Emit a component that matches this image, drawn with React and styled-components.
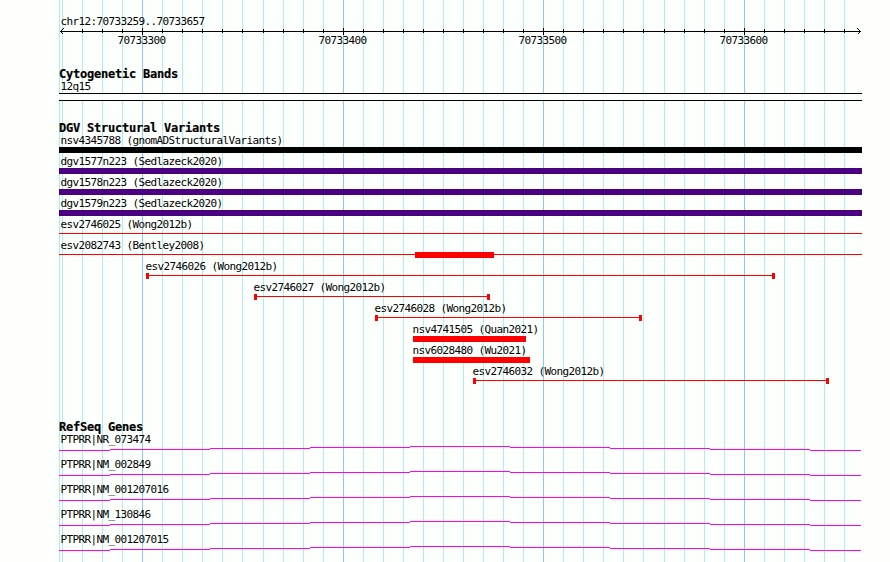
import styled, { createGlobalStyle } from "styled-components";

const VIEW_LEFT = 59;
const VIEW_WIDTH = 803;

const MAJOR_LINES = [142, 343, 543, 744];
const MINOR_LINES = [
  59, 62, 82, 102, 122, 162, 182, 202, 222, 242, 263, 283, 303, 323, 363, 383,
  403, 423, 443, 463, 483, 503, 523, 563, 583, 603, 623, 643, 664, 684, 704,
  724, 764, 784, 804, 824, 844,
];

const RULER_LABELS = [
  { x: 118, text: "70733300" },
  { x: 319, text: "70733400" },
  { x: 519, text: "70733500" },
  { x: 720, text: "70733600" },
];

const VARIANTS = [
  { name: "nsv4345788 (gnomADStructuralVariants)", type: "bar", start: 59, end: 862, label: 60, color: "#000000" },
  { name: "dgv1577n223 (Sedlazeck2020)", type: "bar", start: 59, end: 862, label: 60, color: "#4b0082" },
  { name: "dgv1578n223 (Sedlazeck2020)", type: "bar", start: 59, end: 862, label: 60, color: "#4b0082" },
  { name: "dgv1579n223 (Sedlazeck2020)", type: "bar", start: 59, end: 862, label: 60, color: "#4b0082" },
  { name: "esv2746025 (Wong2012b)", type: "line", start: 59, end: 862, label: 60 },
  { name: "esv2082743 (Bentley2008)", type: "line", start: 59, end: 862, label: 60, core: [415, 494] },
  { name: "esv2746026 (Wong2012b)", type: "span", start: 146, end: 775, label: 145 },
  { name: "esv2746027 (Wong2012b)", type: "span", start: 254, end: 490, label: 253 },
  { name: "esv2746028 (Wong2012b)", type: "span", start: 375, end: 642, label: 374 },
  { name: "nsv4741505 (Quan2021)", type: "bar", start: 413, end: 526, label: 412, color: "#ff0000" },
  { name: "nsv6028480 (Wu2021)", type: "bar", start: 413, end: 530, label: 412, color: "#ff0000" },
  { name: "esv2746032 (Wong2012b)", type: "span", start: 473, end: 829, label: 472 },
];

const GENES = [
  "PTPRR|NR_073474",
  "PTPRR|NM_002849",
  "PTPRR|NM_001207016",
  "PTPRR|NM_130846",
  "PTPRR|NM_001207015",
];

// Intron hat, one entry per flat step: start, end, rise
const INTRON_STEPS = [
  [59, 110, 0],
  [110, 210, 1],
  [210, 310, 2],
  [310, 410, 3],
  [410, 510, 4],
  [510, 610, 3],
  [610, 710, 2],
  [710, 810, 1],
  [810, 861, 0],
];

const gridLine = (x, color) =>
  `linear-gradient(${color}, ${color}) ${x}px 0 / 1px 100% no-repeat`;

const gridBackground = [
  ...MAJOR_LINES.map((x) => gridLine(x, "#87ceeb")),
  ...MINOR_LINES.map((x) => gridLine(x, "#afeeee")),
].join(", ");

const GlobalStyle = createGlobalStyle`
  body {
    margin: 0;
    background: #fdfffc;
  }
`;

const StyledBrowser = styled.div`
  box-sizing: border-box;
  width: 890px;
  height: 562px;
  padding-top: 15px;
  overflow: hidden;
  background: ${gridBackground}, #fdfffc;
  color: #000000;
  font-family: "DejaVu Sans Mono", monospace;
  font-size: 11px;
  letter-spacing: -0.62px;
`;

const StyledTrack = styled.section`
  margin-top: ${(props) => props.$gap || 0}px;
`;

const StyledHeading = styled.h2`
  margin: 0 0 0 ${VIEW_LEFT}px;
  height: 12px;
  font-size: 12px;
  font-weight: 700;
  line-height: 13px;
  letter-spacing: -0.22px;
  -webkit-text-stroke: 0.2px #000000;
  white-space: pre;
`;

const StyledLabel = styled.div`
  height: 13px;
  margin-left: ${(props) => props.$x}px;
  line-height: 13px;
  text-indent: 0.4px;
  white-space: pre;
`;

const StyledRuler = styled.svg`
  display: block;
  width: 890px;
  height: 20px;
`;

const StyledBand = styled.div`
  box-sizing: border-box;
  width: ${VIEW_WIDTH}px;
  height: 8px;
  margin-left: ${VIEW_LEFT}px;
  border-top: 1px solid #000000;
  border-bottom: 1px solid #000000;
  background: #fdfffc;
`;

const StyledVariant = styled.div`
  height: 21px;
`;

const StyledGlyph = styled.div`
  display: flex;
  width: ${(props) => props.$end - props.$start}px;
  height: 6px;
  margin-left: ${(props) => props.$start}px;
  background: ${(props) => props.$color || "transparent"};
`;

const StyledLine = styled.div`
  flex: ${(props) => (props.$width ? `0 0 ${props.$width}px` : 1)};
  height: 1px;
  margin-top: 2px;
  background: #ff0000;
`;

const StyledBlock = styled.div`
  flex: 0 0 ${(props) => props.$width}px;
  height: 6px;
  background: #ff0000;
`;

const StyledGene = styled.div`
  height: 25px;
`;

const StyledIntron = styled.svg`
  display: block;
  width: 890px;
  height: 8px;
`;

function Ruler() {
  return (
    <StyledRuler viewBox="0 28 890 20" shapeRendering="crispEdges">
      <rect x="60" y="31" width="801" height="1" />
      <path d="M63.5 28.5L60.5 31.5L63.5 34.5M857.5 28.5L860.5 31.5L857.5 34.5" fill="none" stroke="#000000" />
      {MINOR_LINES.filter((x) => x > 62).map((x) => (
        <rect key={x} x={x} y="29" width="1" height="4" />
      ))}
      {MAJOR_LINES.map((x) => (
        <rect key={x} x={x} y="28" width="1" height="7" />
      ))}
      {RULER_LABELS.map((label) => (
        <text key={label.text} x={label.x - 0.5} y="44">
          {label.text}
        </text>
      ))}
    </StyledRuler>
  );
}

function Variant({ variant }) {
  const { name, type, start, end, label, color, core } = variant;
  return (
    <StyledVariant>
      <StyledLabel $x={label}>{name}</StyledLabel>
      <StyledGlyph $start={start} $end={end} $color={color}>
        {type === "span" && <StyledBlock $width={3} />}
        {type !== "bar" && <StyledLine $width={core && core[0] - start} />}
        {core && <StyledBlock $width={core[1] - core[0]} />}
        {core && <StyledLine />}
        {type === "span" && <StyledBlock $width={3} />}
      </StyledGlyph>
    </StyledVariant>
  );
}

export default function App() {
  return (
    <>
      <GlobalStyle />
      <StyledBrowser>
        <StyledLabel $x={60}>chr12:70733259..70733657</StyledLabel>
        <Ruler />

        <StyledTrack $gap={20}>
          <StyledHeading>Cytogenetic Bands</StyledHeading>
          <StyledLabel $x={60}>12q15</StyledLabel>
          <StyledBand />
        </StyledTrack>

        <StyledTrack $gap={21}>
          <StyledHeading>DGV Structural Variants</StyledHeading>
          {VARIANTS.map((variant) => (
            <Variant key={variant.name} variant={variant} />
          ))}
        </StyledTrack>

        <StyledTrack $gap={35}>
          <StyledHeading>RefSeq Genes</StyledHeading>
          {GENES.map((gene) => (
            <StyledGene key={gene}>
              <StyledLabel $x={60}>{gene}</StyledLabel>
              <StyledIntron shapeRendering="crispEdges">
                {INTRON_STEPS.map(([start, end, rise]) => (
                  <rect key={start} x={start} y={4 - rise} width={end - start} height="1" fill="#ff00ff" />
                ))}
              </StyledIntron>
            </StyledGene>
          ))}
        </StyledTrack>
      </StyledBrowser>
    </>
  );
}
